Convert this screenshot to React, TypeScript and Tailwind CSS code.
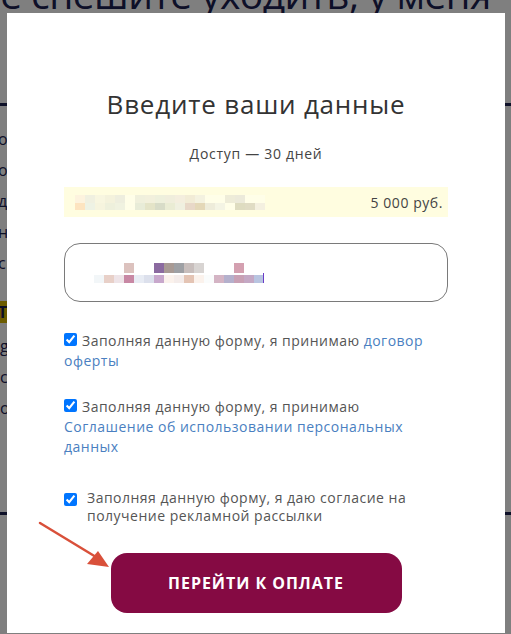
import React from 'react';

const barBlocksTop = [
  'bg-[#fdf3de]', 'bg-[#f0f0e0]', 'bg-[#f8f6e0]', 'bg-[#f4f2dc]', 'bg-[#eeeede]', 'bg-[#fffee8]',
  'bg-[#f0f0dc]', 'bg-[#f2f0dc]', 'bg-[#eef0dc]', 'bg-[#f0eedc]', 'bg-[#f4eede]', 'bg-[#f2ecd6]',
  'bg-[#f4f2e0]', 'bg-[#fffee8]', 'bg-[#fffee8]', 'bg-[#eeecd8]', 'bg-[#eceada]', 'bg-[#fffee8]',
  'bg-[#fffee8]',
];
const barBlocksBottom = [
  'bg-[#fde4c0]', 'bg-[#eef2e4]', 'bg-[#f6f4de]', 'bg-[#eef0dc]', 'bg-[#f0f2e0]', 'bg-[#fffee8]',
  'bg-[#e8ecd8]', 'bg-[#e4e4c8]', 'bg-[#d8dcc8]', 'bg-[#eaecd4]', 'bg-[#f0f0e0]', 'bg-[#e8d8c8]',
  'bg-[#e4d8b8]', 'bg-[#eeecda]', 'bg-[#f4f4e4]', 'bg-[#fffee8]', 'bg-[#dedcc0]', 'bg-[#e0dcc4]',
  'bg-[#f4f0e0]',
];

const inputTop = [
  'bg-white', 'bg-white', 'bg-white', 'bg-white', 'bg-[#dcc2be]', 'bg-white', 'bg-white',
  'bg-[#8b6aa0]', 'bg-[#a89a94]', 'bg-[#9ea0a4]', 'bg-[#c8bebc]', 'bg-[#d8d4d2]', 'bg-white',
  'bg-white', 'bg-white', 'bg-[#d4a0b0]', 'bg-white', 'bg-white',
];
const inputBottom = [
  'bg-white', 'bg-[#f2f6f8]', 'bg-[#e8d0c8]', 'bg-[#eee4e8]', 'bg-[#c888a4]', 'bg-[#e8ecf4]',
  'bg-[#dce0ec]', 'bg-[#c8a8cc]', 'bg-[#fbf2ec]', 'bg-[#f4ecea]', 'bg-[#e4c4b4]', 'bg-[#fbf2ec]',
  'bg-[#fafcfc]', 'bg-[#d4b4c4]', 'bg-[#b4b0cc]', 'bg-[#c8a0b4]', 'bg-[#c4a8c4]', 'bg-[#b8c4e0]',
];

const pageRows = [
  'о приложений, которые помогут вам от',
  'о начать работать с кодом уже сегодня ъ',
  'д самостоятельно и без лишних затрат м',
  'н программировать на новом уровне м',
  'с пошаговыми инструкциями и практикой',
];

const Check = ({ top = 'mt-[2px]' }: { top?: string }) => (
  <input
    type="checkbox"
    checked
    readOnly
    className={`${top} h-[13px] w-[13px] shrink-0 accent-[#0075ff]`}
  />
);

const App: React.FC = () => {
  return (
    <div className="relative h-[634px] w-[511px] overflow-hidden bg-white font-['Open_Sans',sans-serif]">
      {/* page behind the popup */}
      <div className="flex flex-col text-[#1b2050]">
        <h1 className="-mt-[30px] ml-[-28px] whitespace-nowrap text-[39px] leading-[48px] tracking-[-0.015em]">
          Не спешите уходить, у меня
        </h1>
        <div className="mt-[85px] h-[3px] w-full bg-[#1b2050]" />
        <div className="mt-[18px] flex flex-col">
          {pageRows.map((row, i) => (
            <p key={i} className="ml-[-2px] h-[31px] whitespace-nowrap text-[16px] leading-[31px]">
              {row}
            </p>
          ))}
        </div>
        <div className="mt-[22px] flex h-[22px] items-center">
          <span className="ml-[-4px] bg-[#d8b800] px-[2px] text-[16px] font-bold leading-[22px]">ТТ</span>
        </div>
        <div className="mt-[8px] flex flex-col">
          <p className="h-[31px] whitespace-nowrap text-[16px] leading-[31px]">g</p>
          <p className="h-[31px] whitespace-nowrap text-[16px] leading-[31px]">с</p>
          <p className="h-[31px] whitespace-nowrap text-[16px] leading-[31px]">о</p>
        </div>
        <div className="mt-[88px] h-[3px] w-full bg-[#1b2050]" />
      </div>

      {/* overlay */}
      <div className="absolute inset-0 bg-black/50" />

      {/* popup */}
      <div className="absolute left-[7px] top-[13px] flex h-[620px] w-[498px] flex-col items-center bg-white">
        <h2 className="mt-[76px] text-[26px] leading-[30px] tracking-[0.03em] text-[#333]">
          Введите ваши данные
        </h2>
        <p className="mt-[26px] text-[14px] leading-[18px] tracking-[0.05em] text-[#444]">Доступ — 30 дней</p>

        <div className="mt-[24px] flex h-[30px] w-[384px] items-center justify-between bg-[#fffde0] pl-[11px] pr-[5px]">
          <div className="flex flex-col">
            <div className="flex">
              {barBlocksTop.map((c, i) => (
                <div key={i} className={`h-[8px] w-[10px] ${c}`} />
              ))}
            </div>
            <div className="flex">
              {barBlocksBottom.map((c, i) => (
                <div key={i} className={`h-[7px] w-[10px] ${c}`} />
              ))}
            </div>
          </div>
          <span className="text-[14px] tracking-[0.04em] text-[#444]">5 000 руб.</span>
        </div>

        <div className="mt-[26px] flex h-[59px] w-[384px] items-center rounded-[16px] border border-[#7a7a7a] pl-[19px]">
          <div className="flex flex-col">
            <div className="flex">
              {inputTop.map((c, i) => (
                <div key={i} className={`h-[10px] w-[10px] ${c}`} />
              ))}
            </div>
            <div className="flex items-end">
              {inputBottom.map((c, i) => (
                <div key={i} className={`h-[8px] w-[10px] ${c}`} />
              ))}
              <div className="ml-[-1px] h-[10px] w-[1px] bg-[#6a3cc8]" />
            </div>
          </div>
        </div>

        <div className="mt-[29px] flex w-[384px] flex-col text-[14px] leading-[20px] tracking-[0.035em] text-[#555]">
          <div className="flex gap-[5px]">
            <Check />
            <p>
              Заполняя данную форму, я принимаю <span className="text-[#4a7fc1]">договор</span>
            </p>
          </div>
          <p className="text-[#4a7fc1]">оферты</p>

          <div className="mt-[26px] flex gap-[5px]">
            <Check />
            <p>Заполняя данную форму, я принимаю</p>
          </div>
          <p className="text-[#4a7fc1]">Соглашение об использовании персональных</p>
          <p className="text-[#4a7fc1]">данных</p>

          <div className="mt-[32px] flex gap-[10px]">
            <Check top="mt-[4px]" />
            <p className="leading-[18px]">
              Заполняя данную форму, я даю согласие на
              <br />
              получение рекламной рассылки
            </p>
          </div>
        </div>

        <button className="mt-[28px] h-[60px] w-[291px] rounded-[16px] bg-[#850a43] text-[16px] font-bold tracking-[0.06em] text-white">
          ПЕРЕЙТИ К ОПЛАТЕ
        </button>
      </div>

      {/* annotation arrow */}
      <svg className="absolute left-0 top-0" width="511" height="634" viewBox="0 0 511 634">
        <line x1="40" y1="523" x2="96" y2="557" stroke="#d9503a" strokeWidth="2.5" strokeLinecap="round" />
        <polygon points="109,567 87,564 98,551" fill="#d9503a" />
      </svg>
    </div>
  );
};

export default App;
